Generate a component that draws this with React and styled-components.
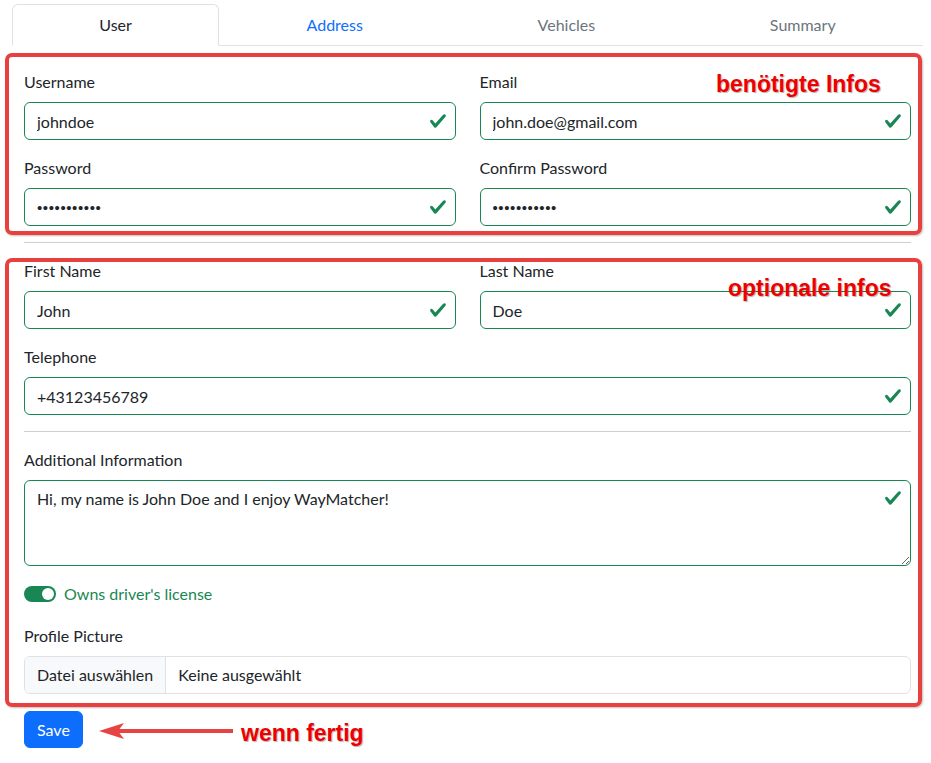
import React from 'react';
import styled, { createGlobalStyle } from 'styled-components';

const GlobalStyle = createGlobalStyle`
  *, *::before, *::after { box-sizing: border-box; }
  html, body { margin: 0; padding: 0; background: #fff; }
  body {
    font-family: Lato, "Noto Sans", sans-serif;
    font-size: 16px;
    line-height: 24px;
    color: #212529;
  }
`;

const Page = styled.div`
  position: relative;
  width: 931px;
  padding: 4px 8px 16px 12px;
`;

const Nav = styled.nav`
  display: flex;
  border-bottom: 1px solid #dee2e6;
`;

const Tab = styled.a`
  flex: 1 1 auto;
  text-align: center;
  padding: 8px 16px;
  margin-bottom: -1px;
  border: 1px solid transparent;
  border-top-left-radius: 6px;
  border-top-right-radius: 6px;
  text-decoration: none;
  color: ${(p) => (p.$active ? '#212529' : p.$link ? '#0d6efd' : '#6c757d')};
  background: ${(p) => (p.$active ? '#fff' : 'transparent')};
  border-color: ${(p) => (p.$active ? '#dee2e6 #dee2e6 #fff' : 'transparent')};
`;

const Form = styled.form`
  padding: 24px 12px 0;
`;

const Row = styled.div`
  display: grid;
  grid-template-columns: 1fr 1fr;
  column-gap: 24px;
`;

const Field = styled.div`
  margin-bottom: ${(p) => p.$mb ?? 16}px;
`;

const Label = styled.label`
  display: block;
  margin-bottom: 8px;
`;

const InputWrap = styled.div`
  position: relative;
`;

const TextInput = styled.input`
  display: block;
  width: 100%;
  height: 38px;
  padding: 6px 36px 6px 12px;
  font: inherit;
  font-family: ${(p) => (p.type === 'password' ? '"Liberation Sans", Arial, sans-serif' : 'inherit')};
  font-size: ${(p) => (p.type === 'password' ? '15px' : '16px')};
  letter-spacing: ${(p) => (p.type === 'password' ? '0.6px' : 'normal')};
  color: #212529;
  background: #fff;
  border: 1px solid #198754;
  border-radius: 6px;
  outline: none;
`;

const TextArea = styled.textarea`
  display: block;
  width: 100%;
  height: 86px;
  padding: 6px 36px 6px 12px;
  font: inherit;
  color: #212529;
  background: #fff;
  border: 1px solid #198754;
  border-radius: 6px;
  outline: none;
  resize: vertical;
`;

const ValidIcon = styled.svg`
  position: absolute;
  right: 9px;
  top: ${(p) => (p.$top ? '9px' : '10px')};
  width: 18px;
  height: 18px;
  pointer-events: none;
`;

const Divider = styled.hr`
  margin: 16px 0;
  border: 0;
  border-top: 1px solid #cfcfcf;
`;

const SwitchRow = styled.div`
  display: flex;
  align-items: center;
  gap: 8px;
  min-height: 24px;
  margin-bottom: 18px;
`;

const SwitchTrack = styled.span`
  position: relative;
  display: inline-block;
  width: 32px;
  height: 16px;
  border-radius: 8px;
  background: #198754;
  &::after {
    content: '';
    position: absolute;
    top: 2px;
    right: 2px;
    width: 12px;
    height: 12px;
    border-radius: 50%;
    background: #fff;
  }
`;

const SwitchLabel = styled.span`
  color: #198754;
`;

const FileBox = styled.div`
  display: flex;
  height: 38px;
  border: 1px solid #dee2e6;
  border-radius: 6px;
  overflow: hidden;
`;

const FileButton = styled.span`
  display: flex;
  align-items: center;
  padding: 0 12px;
  background: #f8f9fa;
  border-right: 1px solid #dee2e6;
`;

const FileName = styled.span`
  display: flex;
  align-items: center;
  padding: 0 12px;
`;

const SaveButton = styled.button`
  display: block;
  margin-top: 17px;
  height: 37px;
  padding: 6px 12px;
  font: inherit;
  color: #fff;
  background: #0d6efd;
  border: 1px solid #0d6efd;
  border-radius: 6px;
`;

const Highlight = styled.div`
  position: absolute;
  left: ${(p) => p.$x}px;
  top: ${(p) => p.$y}px;
  width: ${(p) => p.$w}px;
  height: ${(p) => p.$h}px;
  border: 4px solid #e8403f;
  border-radius: 7px;
  box-shadow: 1px 1px 2px rgba(0, 0, 0, 0.25);
  pointer-events: none;
`;

const Note = styled.div`
  position: absolute;
  left: ${(p) => p.$x}px;
  top: ${(p) => p.$y}px;
  font-family: "Liberation Sans", Arial, sans-serif;
  font-weight: 700;
  font-size: 23px;
  line-height: 26px;
  color: #ee0000;
  text-shadow: 1px 1px 1px rgba(0, 0, 0, 0.3);
  white-space: nowrap;
`;

const Arrow = styled.svg`
  position: absolute;
  left: 96px;
  top: 720px;
  width: 142px;
  height: 22px;
`;

const Check = ({ top }) => (
  <ValidIcon $top={top} viewBox="0 0 8 8">
    <path
      fill="#198754"
      d="M2.3 6.73.6 4.53c-.4-1.04.46-1.4 1.1-.8l1.1 1.4 3.4-3.8c.6-.63 1.6-.27 1.2.7l-4 4.6c-.43.5-.8.4-1.1.1z"
    />
  </ValidIcon>
);

const InputField = ({ label, value, type = 'text', mb }) => (
  <Field $mb={mb}>
    <Label>{label}</Label>
    <InputWrap>
      <TextInput type={type} defaultValue={value} readOnly />
      <Check />
    </InputWrap>
  </Field>
);

export default function App() {
  return (
    <>
      <GlobalStyle />
      <Page>
        <Nav>
          <Tab $active>User</Tab>
          <Tab $link>Address</Tab>
          <Tab>Vehicles</Tab>
          <Tab>Summary</Tab>
        </Nav>
        <Form onSubmit={(e) => e.preventDefault()}>
          <Row>
            <InputField label="Username" value="johndoe" />
            <InputField label="Email" value="john.doe@gmail.com" />
            <InputField label="Password" value="***********" type="password" mb={0} />
            <InputField label="Confirm Password" value="***********" type="password" mb={0} />
          </Row>
          <Divider />
          <Row>
            <InputField label="First Name" value="John" />
            <InputField label="Last Name" value="Doe" />
          </Row>
          <InputField label="Telephone" value="+43123456789" mb={0} />
          <Divider />
          <Field>
            <Label>Additional Information</Label>
            <InputWrap>
              <TextArea rows={3} defaultValue="Hi, my name is John Doe and I enjoy WayMatcher!" readOnly />
              <Check top />
            </InputWrap>
          </Field>
          <SwitchRow>
            <SwitchTrack />
            <SwitchLabel>Owns driver's license</SwitchLabel>
          </SwitchRow>
          <Field $mb={0}>
            <Label>Profile Picture</Label>
            <FileBox>
              <FileButton>Datei auswählen</FileButton>
              <FileName>Keine ausgewählt</FileName>
            </FileBox>
          </Field>
          <SaveButton type="submit">Save</SaveButton>
        </Form>

        <Highlight $x={5} $y={53} $w={917} $h={182} />
        <Highlight $x={5} $y={258} $w={917} $h={449} />
        <Note $x={716} $y={71}>benötigte Infos</Note>
        <Note $x={728} $y={275}>optionale infos</Note>
        <Note $x={241} $y={720}>wenn fertig</Note>
        <Arrow viewBox="0 0 142 22">
          <line x1="20" y1="11" x2="137" y2="11" stroke="#e84343" strokeWidth="4" />
          <polygon points="3,11 28,3 22,11 28,19" fill="#e84343" />
        </Arrow>
      </Page>
    </>
  );
}
